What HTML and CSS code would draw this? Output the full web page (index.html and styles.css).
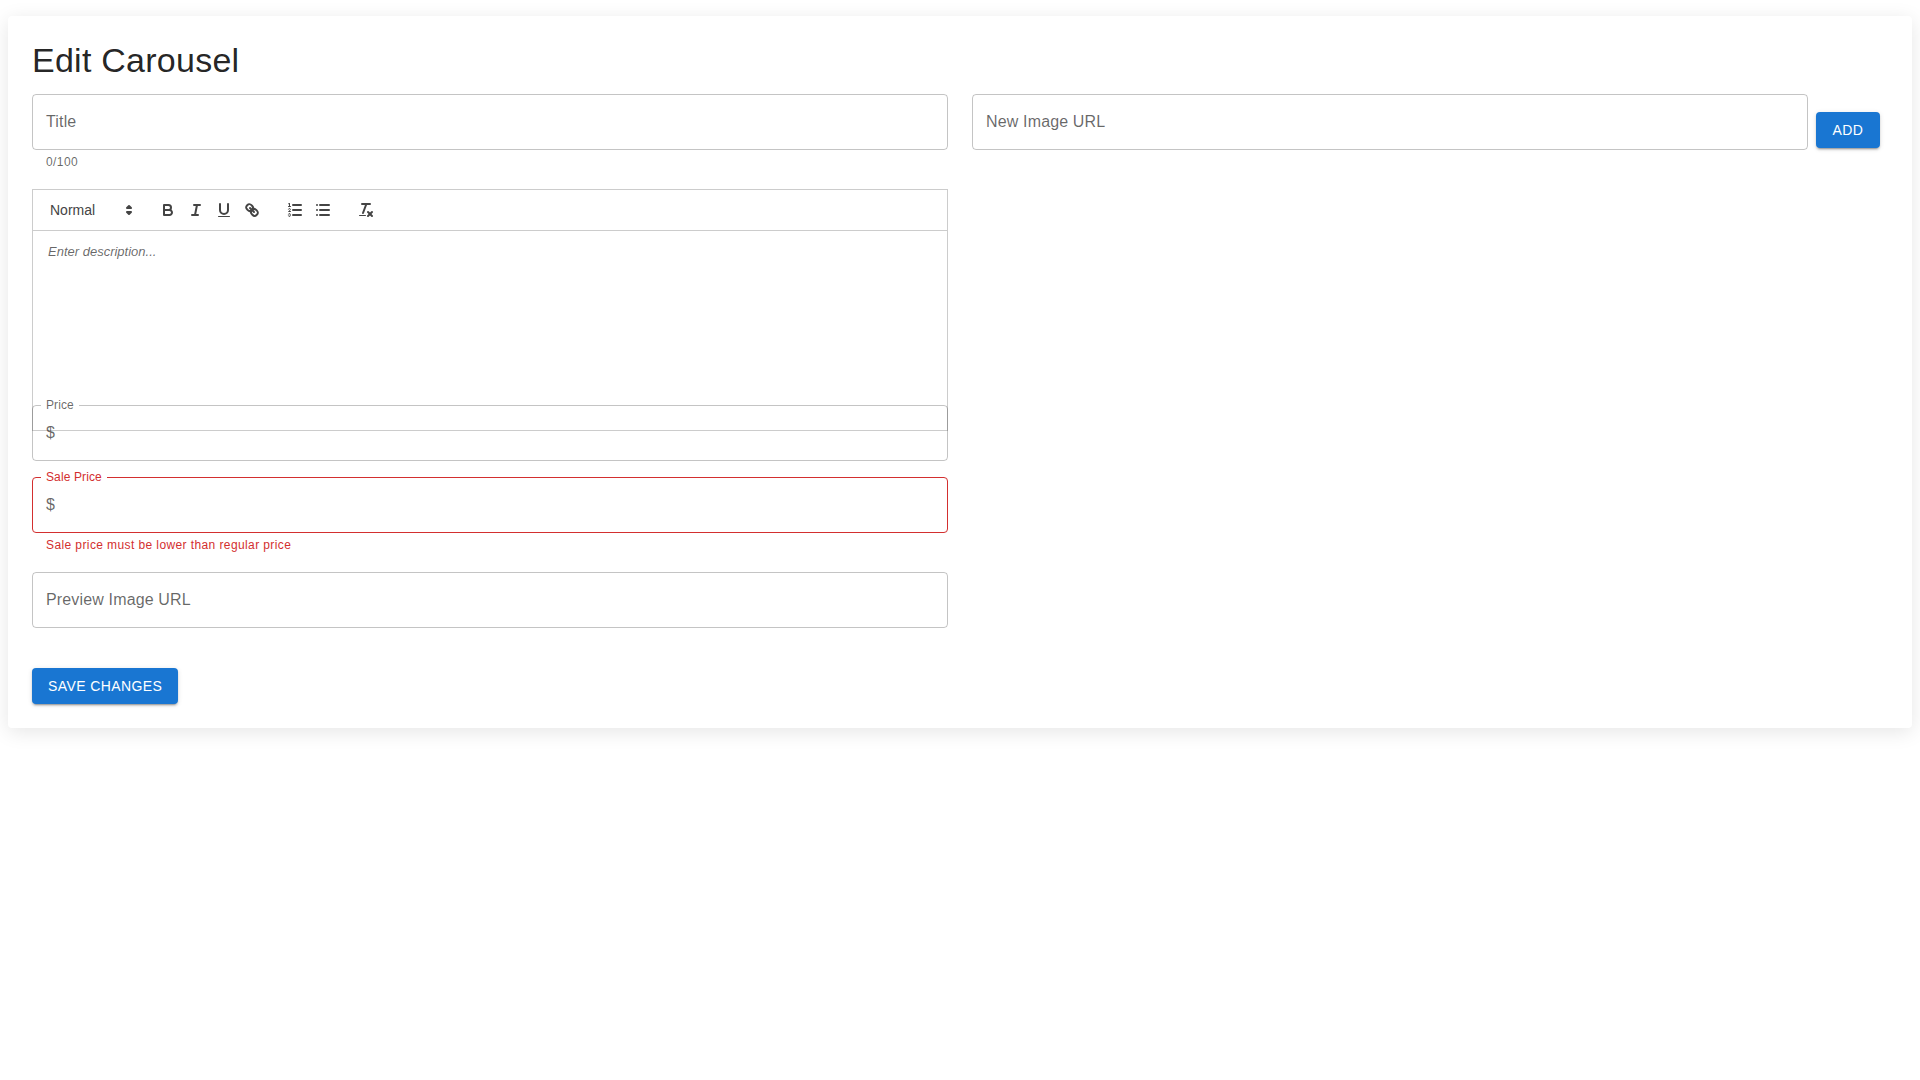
FILE: index.html
```html
<!DOCTYPE html>
<html lang="en">
<head>
<meta charset="utf-8">
<title>Edit Carousel</title>
<link rel="stylesheet" href="styles.css">
</head>
<body>
<main class="paper">
  <h1 class="heading">Edit Carousel</h1>
  <div class="columns">
    <div class="col">
      <div class="group">
        <div class="field"><label class="label" for="title">Title</label><input class="input" id="title" type="text"></div>
        <p class="helper">0/100</p>
      </div>
      <div class="editor">
        <div class="toolbar">
          <div class="formats">
            <span class="picker">Normal
              <svg class="picker-icon" viewBox="0 0 18 18"><polygon class="st" points="7 11 9 13 11 11 7 11"/><polygon class="st" points="7 7 9 5 11 7 7 7"/></svg>
            </span>
          </div>
          <div class="formats">
            <button class="tool" type="button" aria-label="Bold"><svg viewBox="0 0 18 18"><path class="st" d="M5,4H9.5A2.5,2.5,0,0,1,12,6.5v0A2.5,2.5,0,0,1,9.5,9H5A0,0,0,0,1,5,9V4A0,0,0,0,1,5,4Z"/><path class="st" d="M5,9h5.5A2.5,2.5,0,0,1,13,11.5v0A2.5,2.5,0,0,1,10.5,14H5a0,0,0,0,1,0,0V9A0,0,0,0,1,5,9Z"/></svg></button>
            <button class="tool" type="button" aria-label="Italic"><svg viewBox="0 0 18 18"><line class="st" x1="7" x2="13" y1="4" y2="4"/><line class="st" x1="5" x2="11" y1="14" y2="14"/><line class="st" x1="8" x2="10" y1="14" y2="4"/></svg></button>
            <button class="tool" type="button" aria-label="Underline"><svg viewBox="0 0 18 18"><path class="st" d="M5,3V9a4.012,4.012,0,0,0,4,4H9a4.012,4.012,0,0,0,4-4V3"/><rect class="fl" height="1" rx="0.5" ry="0.5" width="12" x="3" y="15"/></svg></button>
            <button class="tool" type="button" aria-label="Link"><svg viewBox="0 0 18 18"><line class="st" x1="7" x2="11" y1="7" y2="11"/><path class="st" d="M8.9,4.577a3.476,3.476,0,0,1,.36,4.679A3.476,3.476,0,0,1,4.577,8.9C3.185,7.5,2.035,6.4,4.217,4.217S7.5,3.185,8.9,4.577Z"/><path class="st" d="M13.423,9.1a3.476,3.476,0,0,0-4.679-.36,3.476,3.476,0,0,0,.36,4.679c1.392,1.392,2.5,2.542,4.679.36S14.815,10.5,13.423,9.1Z"/></svg></button>
          </div>
          <div class="formats">
            <button class="tool" type="button" aria-label="Ordered list"><svg viewBox="0 0 18 18"><line class="st" x1="7" x2="15" y1="4" y2="4"/><line class="st" x1="7" x2="15" y1="9" y2="9"/><line class="st" x1="7" x2="15" y1="14" y2="14"/><line class="st thin" x1="2.5" x2="4.5" y1="5.5" y2="5.5"/><path class="fl" d="M3.5,6A0.5,0.5,0,0,1,3,5.5V3.085l-0.276.138A0.5,0.5,0,0,1,2.053,3c-0.124-.247-0.023-0.324.224-0.447l1-.5A0.5,0.5,0,0,1,4,2.5v3A0.5,0.5,0,0,1,3.5,6Z"/><path class="st thin" d="M4.5,10.5h-2c0-.234,1.85-1.076,1.85-2.234A0.959,0.959,0,0,0,2.5,8.156"/><path class="st thin" d="M2.5,14.846a0.959,0.959,0,0,0,1.85-.109A0.7,0.7,0,0,0,3.75,14a0.688,0.688,0,0,0,.6-0.736,0.959,0.959,0,0,0-1.85-.109"/></svg></button>
            <button class="tool" type="button" aria-label="Bullet list"><svg viewBox="0 0 18 18"><line class="st" x1="6" x2="15" y1="4" y2="4"/><line class="st" x1="6" x2="15" y1="9" y2="9"/><line class="st" x1="6" x2="15" y1="14" y2="14"/><line class="st" x1="3" x2="3" y1="4" y2="4"/><line class="st" x1="3" x2="3" y1="9" y2="9"/><line class="st" x1="3" x2="3" y1="14" y2="14"/></svg></button>
          </div>
          <div class="formats">
            <button class="tool" type="button" aria-label="Clear formatting"><svg viewBox="0 0 18 18"><line class="st" x1="5" x2="13" y1="3" y2="3"/><line class="st" x1="6" x2="9.35" y1="12" y2="3"/><line class="st" x1="11" x2="15" y1="11" y2="15"/><line class="st" x1="15" x2="11" y1="11" y2="15"/><rect class="fl" height="1" rx="0.5" ry="0.5" width="7" x="2" y="14"/></svg></button>
          </div>
        </div>
        <div class="editor-body"><p class="placeholder">Enter description...</p></div>
      </div>
      <div class="group">
        <div class="field"><label class="label shrunk" for="price">Price</label><span class="adorn">$</span><input class="input" id="price" type="text"></div>
      </div>
      <div class="group">
        <div class="field error"><label class="label shrunk" for="sale">Sale Price</label><span class="adorn">$</span><input class="input" id="sale" type="text"></div>
        <p class="helper helper-error">Sale price must be lower than regular price</p>
      </div>
      <div class="field"><label class="label" for="preview">Preview Image URL</label><input class="input" id="preview" type="text"></div>
      <div class="actions"><button class="btn" type="button">Save Changes</button></div>
    </div>
    <div class="col-right">
      <div class="field grow"><label class="label" for="image">New Image URL</label><input class="input" id="image" type="text"></div>
      <button class="btn" type="button">Add</button>
    </div>
  </div>
</main>
</body>
</html>
```
FILE: styles.css
```css
* { box-sizing: border-box; }
html, body { margin: 0; padding: 0; background: #fff; }
body {
  min-height: 100vh;
  padding: 16px 8px 0;
  font-family: "Liberation Sans", Arial, sans-serif;
  color: rgba(0, 0, 0, 0.87);
  font-size: 16px;
}
.paper {
  padding: 24px;
  background: #fff;
  border-radius: 4px;
  box-shadow: 0 4px 20px rgba(0, 0, 0, 0.1);
}
.heading {
  margin: 0 0 12px;
  font-size: 34px;
  font-weight: 400;
  line-height: 1.235;
  letter-spacing: 0.00735em;
}
.columns {
  display: grid;
  grid-template-columns: 916px 1fr;
  column-gap: 24px;
  align-items: start;
}
.col { min-width: 0; }
.col-right { display: flex; align-items: center; gap: 8px; padding-right: 8px; }
.grow { flex: 1; margin-bottom: 16px; }
.group { margin-bottom: 16px; }

.field {
  position: relative;
  display: flex;
  align-items: center;
  height: 56px;
  padding-left: 13px;
  border: 1px solid rgba(0, 0, 0, 0.23);
  border-radius: 4px;
}
.label {
  position: absolute;
  left: 13px;
  top: 15px;
  font-size: 16px;
  line-height: 23px;
  letter-spacing: 0.00938em;
  color: rgba(0, 0, 0, 0.6);
}
.label.shrunk {
  left: 8px;
  top: -9px;
  padding: 0 5px;
  font-size: 12px;
  line-height: 17.25px;
  background: #fff;
}
.input {
  flex: 1;
  min-width: 0;
  height: 100%;
  padding: 0;
  border: 0;
  outline: 0;
  background: transparent;
  font: inherit;
}
.adorn {
  margin-right: 8px;
  font-size: 16px;
  letter-spacing: 0.00938em;
  color: rgba(0, 0, 0, 0.6);
}
.field.error { border-color: #d32f2f; }
.field.error .label { color: #d32f2f; }
.helper {
  margin: 3px 14px 0;
  font-size: 12px;
  line-height: 1.66;
  letter-spacing: 0.03333em;
  color: rgba(0, 0, 0, 0.6);
}
.helper-error { color: #d32f2f; }

.editor { height: 200px; margin-bottom: 16px; }
.toolbar {
  display: flex;
  padding: 8px;
  border: 1px solid #ccc;
  font-family: "Liberation Sans", Arial, sans-serif;
}
.formats { display: flex; margin-right: 15px; }
.picker {
  position: relative;
  display: block;
  width: 98px;
  height: 24px;
  padding-left: 9px;
  font-size: 14px;
  font-weight: 500;
  line-height: 24px;
  color: #444;
}
.picker-icon {
  position: absolute;
  right: 1px;
  top: 3px;
  width: 18px;
  height: 18px;
}
.tool {
  display: block;
  width: 28px;
  height: 24px;
  padding: 3px 5px;
  border: 0;
  background: none;
}
.tool svg { display: block; width: 18px; height: 18px; }
.st {
  fill: none;
  stroke: #444;
  stroke-width: 2;
  stroke-linecap: round;
  stroke-linejoin: round;
}
.st.thin { stroke-width: 1; }
.fl { fill: #444; }
.editor-body {
  height: 100%;
  padding: 12px 15px;
  border: 1px solid #ccc;
  border-top: 0;
  font-size: 13px;
  line-height: 1.42;
}
.placeholder {
  margin: 0;
  font-style: italic;
  color: rgba(0, 0, 0, 0.6);
}
.actions { margin-top: 40px; }
.btn {
  padding: 6px 16px;
  min-width: 64px;
  border: 0;
  border-radius: 4px;
  background: #1976d2;
  color: #fff;
  font-family: inherit;
  font-size: 14px;
  font-weight: 500;
  line-height: 1.75;
  letter-spacing: 0.02857em;
  text-transform: uppercase;
  box-shadow: 0 3px 1px -2px rgba(0,0,0,0.2), 0 2px 2px 0 rgba(0,0,0,0.14), 0 1px 5px 0 rgba(0,0,0,0.12);
}
```
